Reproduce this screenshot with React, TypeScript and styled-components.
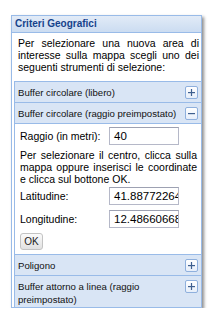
import React from "react";
import styled, { createGlobalStyle } from "styled-components";

const Global = createGlobalStyle`
  html, body { margin: 0; padding: 0; background: #ffffff; }
  body { font-family: "Liberation Sans", Arial, sans-serif; }
`;

const Page = styled.div`
  padding: 15px 0 0 11px;
`;

const Panel = styled.div`
  width: 189px;
  height: 291px;
  border: 1px solid #99bbe8;
  background: #ffffff;
  box-shadow: 2px 2px 3px rgba(0, 0, 0, 0.45);
  display: flex;
  flex-direction: column;
  overflow: hidden;
`;

const Header = styled.div`
  height: 16px;
  line-height: 16px;
  padding-left: 3px;
  background: linear-gradient(#e2ebf7, #cbdcf1);
  border-bottom: 1px solid #99bbe8;
  color: #15428b;
  font-weight: bold;
  font-size: 10px;
`;

const Intro = styled.div`
  padding: 4px 2px 8px 6px;
  font-size: 10.5px;
  line-height: 12px;
  color: #000;
`;

const Line = styled.span<{ $last?: boolean }>`
  display: block;
  text-align: ${(p) => (p.$last ? "left" : "justify")};
  text-align-last: ${(p) => (p.$last ? "left" : "justify")};
  white-space: ${(p) => (p.$last ? "nowrap" : "normal")};
`;

const Accordion = styled.div`
  margin-left: 2px;
  border-left: 1px solid #99bbe8;
  border-top: 1px solid #99bbe8;
  flex: 1;
  display: flex;
  flex-direction: column;
`;

const Row = styled.div`
  display: flex;
  align-items: flex-start;
  justify-content: space-between;
  padding: 4px 3px 3px 3px;
  background: #d9e5f5;
  border-bottom: 1px solid #99bbe8;
  font-size: 9.6px;
  line-height: 13px;
  color: #111;
`;

const Tool = styled.div`
  width: 11px;
  height: 11px;
  border: 1px solid #8fb0dd;
  border-radius: 2px;
  background: linear-gradient(#ffffff, #e6eefa);
  display: flex;
  align-items: center;
  justify-content: center;
  flex-shrink: 0;
`;

const Body = styled.div`
  padding: 3px 4px 4px 5px;
  border-bottom: 1px solid #99bbe8;
  font-size: 10.5px;
  line-height: 12px;
  color: #000;
  display: flex;
  flex-direction: column;
`;

const FieldRow = styled.div<{ $gap: number }>`
  display: flex;
  align-items: center;
  margin-bottom: ${(p) => p.$gap}px;
`;

const Label = styled.div`
  width: 89px;
  flex-shrink: 0;
`;

const Input = styled.div`
  width: 64px;
  height: 16px;
  line-height: 17px;
  font-size: 11.5px;
  border: 1px solid #b5b8c8;
  border-top-color: #9da1b2;
  background: #fff;
  padding-left: 4px;
  overflow: hidden;
  white-space: nowrap;
`;

const Paragraph = styled.div`
  margin: 0 0 2px;
`;

const Button = styled.div`
  width: 21px;
  height: 15px;
  border: 1px solid #c3c3c3;
  border-radius: 3px;
  background: linear-gradient(#fbfbfb, #e1e1e1);
  font-size: 10px;
  line-height: 16px;
  text-align: center;
  color: #222;
`;

const Plus = ({ minus }: { minus?: boolean }) => (
  <Tool>
    <svg width="9" height="9" viewBox="0 0 9 9">
      <rect x="1" y="4" width="7" height="1.2" fill="#3f5f8f" />
      {!minus && <rect x="3.9" y="1" width="1.2" height="7" fill="#3f5f8f" />}
    </svg>
  </Tool>
);

export default function App() {
  return (
    <Page>
      <Global />
      <Panel>
        <Header>Criteri Geografici</Header>
        <Intro>
          <Line>Per selezionare una nuova area di</Line>
          <Line>interesse sulla mappa scegli uno dei</Line>
          <Line $last>seguenti strumenti di selezione:</Line>
        </Intro>
        <Accordion>
          <Row>
            <span>Buffer circolare (libero)</span>
            <Plus />
          </Row>
          <Row>
            <span>Buffer circolare (raggio preimpostato)</span>
            <Plus minus />
          </Row>
          <Body>
            <FieldRow $gap={4}>
              <Label>Raggio (in metri):</Label>
              <Input>40</Input>
            </FieldRow>
            <Paragraph>
              <Line>Per selezionare il centro, clicca sulla</Line>
              <Line>mappa oppure inserisci le coordinate</Line>
              <Line $last>e clicca sul bottone OK.</Line>
            </Paragraph>
            <FieldRow $gap={5}>
              <Label>Latitudine:</Label>
              <Input>41.88772264</Input>
            </FieldRow>
            <FieldRow $gap={5}>
              <Label>Longitudine:</Label>
              <Input>12.48660668</Input>
            </FieldRow>
            <Button>OK</Button>
          </Body>
          <Row>
            <span>Poligono</span>
            <Plus />
          </Row>
          <Row>
            <span>
              Buffer attorno a linea (raggio
              <br />
              preimpostato)
            </span>
            <Plus />
          </Row>
        </Accordion>
      </Panel>
    </Page>
  );
}
